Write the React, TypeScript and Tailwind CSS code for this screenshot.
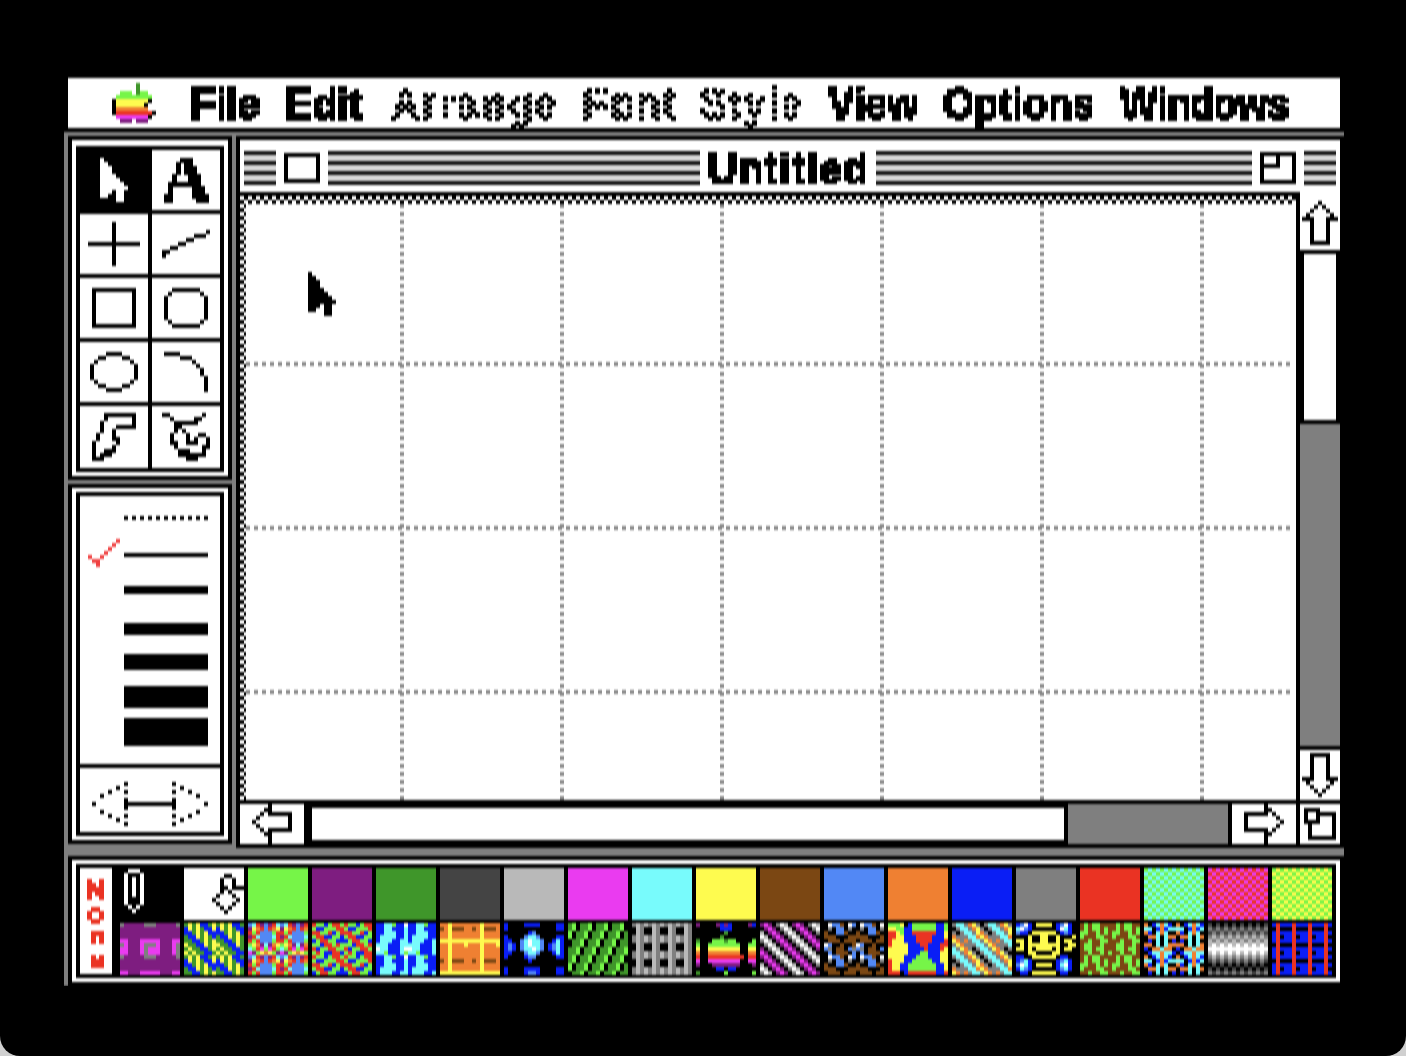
import React from "react";

const colors: Record<string, string> = {
  "#": "#000000",
  K: "#000000",
  W: "#ffffff",
  d: "#444444",
  g: "#7f7f7f",
  l: "#b9b9b9",
  P: "#7e1d80",
  M: "#ea3bf0",
  B: "#0a1ef5",
  b: "#5288f5",
  C: "#78fbfc",
  Y: "#fefb4f",
  G: "#76f548",
  D: "#3f962a",
  R: "#ea3323",
  O: "#ef8032",
  N: "#7b4713",
};

type BitmapProps = {
  rows: string[];
  color?: string;
  cols?: number;
  lines?: number;
  className?: string;
};

// every char of a row is one 4px pixel of the old screen
const Bitmap = ({ rows, color, cols, lines, className }: BitmapProps) => {
  const w = cols ?? rows[0].length;
  const h = lines ?? rows.length;
  const cells = [];
  for (let y = 0; y < h; y++) {
    const row = rows[y % rows.length];
    for (let x = 0; x < w; x++) {
      const c = row[x % row.length];
      if (c === "." || c === undefined) continue;
      cells.push(
        <rect
          key={x + "-" + y}
          x={x * 4}
          y={y * 4}
          width={4}
          height={4}
          fill={c === "#" && color ? color : colors[c]}
        />
      );
    }
  }
  return (
    <svg
      width={w * 4}
      height={h * 4}
      shapeRendering="crispEdges"
      className={className}
    >
      {cells}
    </svg>
  );
};

const flipX = (rows: string[]) => rows.map((r) => r.split("").reverse().join(""));
const flipY = (rows: string[]) => [...rows].reverse();
const mirror = (left: string, mid: string) =>
  left + mid + left.split("").reverse().join("");
const diag = (seq: string) =>
  seq.split("").map((_, i) => seq.slice(-i || seq.length) + seq.slice(0, -i || seq.length));

const arrowCursor = [
  "#......",
  "##.....",
  "###....",
  "###....",
  "####...",
  "#####..",
  "######.",
  "#######",
  "###.##.",
  "##..##.",
  "....##.",
];
const apple = [
  "......D....",
  "......D....",
  "..GGG.DGG..",
  ".GGGGGGGGG.",
  "KYYYYYYYYK.",
  "KYYYYYYYK..",
  "KOOOOOOOO..",
  "KRRRRRRRRRK",
  ".MMMMMMMMK.",
  "..PPP.PPP..",
];
const cross = [
  "......#......",
  "......#......",
  "......#......",
  "......#......",
  "......#......",
  "#############",
  "......#......",
  "......#......",
  "......#......",
  "......#......",
  "......#......",
];
const lineTool = [
  "...........#",
  "........###.",
  "......##....",
  "....##......",
  "..##........",
  "##..........",
  "#...........",
];
const rectTool = [
  "###########",
  "#.........#",
  "#.........#",
  "#.........#",
  "#.........#",
  "#.........#",
  "#.........#",
  "#.........#",
  "#.........#",
  "###########",
];
const roundTool = [
  "..#######..",
  ".#.......#.",
  "#.........#",
  "#.........#",
  "#.........#",
  "#.........#",
  "#.........#",
  "#.........#",
  ".#.......#.",
  "..#######..",
];
const ovalTool = [
  "....####....",
  "..##....##..",
  ".#........#.",
  "#..........#",
  "#..........#",
  "#..........#",
  "#..........#",
  ".#........#.",
  "..##....##..",
  "....####....",
];
const arcTool = [
  "####.......",
  "....###....",
  ".......#...",
  "........#..",
  ".........#.",
  ".........#.",
  "..........#",
  "..........#",
  "..........#",
  "..........#",
];
const polyTool = [
  "...########",
  "...#......#",
  "..#.......#",
  "..#...#####",
  "..#..#.....",
  ".#...#.....",
  ".#...##....",
  "#.....#....",
  "#....#.....",
  "#..###.....",
  "#.###......",
  "###........",
];
const scribbleTool = [
  "##........#.",
  "..#.....##..",
  "...######...",
  "...##.......",
  "...#.#......",
  "..#...#..##.",
  "..#...#.#..#",
  "..##..###..#",
  "...#......##",
  "....###...#.",
  "....#######.",
  "......###...",
];
const upArrow = [
  "....#....",
  "...#.#...",
  "..#...#..",
  ".#.....#.",
  "###...###",
  "..#...#..",
  "..#...#..",
  "..#...#..",
  "..#...#..",
  "..#...#..",
  "..#####..",
];
const leftArrow = [
  "....#.....",
  "...##.....",
  "..#.######",
  ".#.......#",
  "#........#",
  ".#.......#",
  "..#.######",
  "...##.....",
  "....#.....",
  "....#.....",
];
const zoomBox = [
  "#########",
  "#...#...#",
  "#...#...#",
  "#####...#",
  "#.......#",
  "#.......#",
  "#.......#",
  "#########",
];
const growBox = [
  "####....",
  "#..#####",
  "#..#...#",
  "####...#",
  ".#.....#",
  ".#.....#",
  ".#.....#",
  ".#######",
];
const dumbbell = [
  mirror("........#.....", "."),
  mirror("......#.......", "."),
  mirror("....#...#.....", "."),
  mirror("..#...........", "."),
  mirror("........#.....", "."),
  mirror("#.......######", "#"),
  mirror("........#.....", "."),
  mirror("..#...........", "."),
  mirror("....#...#.....", "."),
  mirror("......#.......", "."),
  mirror("........#.....", "."),
];
const checkMark = [
  ".......#",
  "......#.",
  ".....#..",
  "....#...",
  "#..#....",
  ".##.....",
  "..#.....",
];
const pencil = [
  ".###.",
  "#...#",
  "#.#.#",
  "#.#.#",
  "#.#.#",
  "#.#.#",
  "#.#.#",
  "#...#",
  "#...#",
  ".#.#.",
  "..#..",
];
const bucket = [
  "...##...",
  "..#..#..",
  "..#..#..",
  "..##.###",
  "..#.#...",
  ".#...#..",
  "#.....#.",
  ".#...#..",
  "..#.#...",
  "...#....",
];

const solids = [
  "bg-[#76f548]",
  "bg-[#7e1d80]",
  "bg-[#3f962a]",
  "bg-[#444444]",
  "bg-[#b9b9b9]",
  "bg-[#ea3bf0]",
  "bg-[#78fbfc]",
  "bg-[#fefb4f]",
  "bg-[#7b4713]",
  "bg-[#5288f5]",
  "bg-[#ef8032]",
  "bg-[#0a1ef5]",
  "bg-[#7f7f7f]",
  "bg-[#ea3323]",
];
const checks = [["GC", "CG"], ["MR", "RM"], ["GY", "YG"]];

const patterns: string[][] = [
  ["gPPPPPgg", "PPPPPPPP", "PPPPPPPP", "PPPPPPPP", "MMPPPMMM", "gMPPPMgg", "MMPPPMgM", "MMPPPMgM"],
  ["DYDYBBDY", "BYDYDBBY", "BBDYDYBB", "DBBYDYDB", "DDBBDYDY", "YDDBBYDY", "DYDDBBDY", "YDYDDBBD"],
  ["bCRPbPRC", "PYORbROY", "RGRbbbGR", "PRCbbbCR", "RGRbbbGR", "GYOPCPOY", "CGRMGMRG", "MPGYOYGP"],
  ["RGGBGRRG", "GBBGGGRR", "RRGGRBGR", "GRRBBGGB", "BGRRGGBB", "GGBRRGRG", "RBGGRRGG", "GRGBBRRB"],
  ["BBCCGBBW", "BBCCBBBC", "BBCCCBBC", "BCCCCBBC", "BCCCBBCC", "CCCBBBCC", "WCCBBBCW", "CCGBBBCG"],
  ["OOYOOOOO", "NOYNNNOO", "OOYOOOOO", "OOYOOOOO", "YYYYYYYY", "OOYOOOYO", "OOYOOOOO", "OOYOOOOO"],
  [
    "BKKKKBBBBKKKKB",
    "BKKKKKKKKKKKKB",
    "KKKKKKBbKKKKKK",
    "BKKKKbCCbKKKKB",
    "BBKKbCWCCbKKBC",
    "BbBKbCWCCbKBbC",
    "BbBKbCCWCbKBbC",
    "BBKKKbCCbKKKBC",
    "BKKKKBbbKKKKKB",
    "KKKKKKBKKKKKKK",
    "KKKKKKKKKKKKKK",
    "BKKKKBBBBKKKKB",
    "BKKKKBbbBKKKKB",
  ],
  ["DGKDDGKD", "DGKDDGKD", "GKDDGKDD", "GKDDGKDD", "KDDGKDDG", "KDDGKDDG", "DDGKDDGK", "DDGKDDGK"],
  ["glgl", "KlgK", "KlgK", "glgl"],
  [
    "PKKKKPBPBKKKKPB",
    "KKKKKKBBBKKKKKK",
    "KKKKKKKDKKKKKKK",
    "KKKKKKDKKKKKKKK",
    "DKKKGGGDGGKKKKG",
    "GKKGGGGGGGGKKGG",
    "YKKYYYYYYYYKKYY",
    "OKKOOOOOOOOKKOO",
    "RKKRRRRRRRRRKRR",
    "MKKMMMMMMMMKKMM",
    "PKKKPPPPPPPKKKP",
    "KKKKKBBKBBKKKKK",
    "DKKKKKKGKKKKKKG",
  ],
  diag("PMPKgWlK"),
  ["KWbbNKWb", "KgKbbKgK", "NKKbbNKK", "NNNKKKNN", "KNNNKNNN", "WbKKNKKN", "bgKNNKbg", "KbKNNNKb"],
  [
    "GGGYKBGGGGGGBBG",
    "YYGGBBGGGGGGBBG",
    "RRYGBBRRRRRRBBY",
    "RRYYBBBRRRRBBBY",
    "RYYYBBBRRRRBBBR",
    "RYYYYBBBRRBBBRR",
    "YYYYYBBBBRBBBRY",
    "YYYYYBBBGGBBBYY",
    "YYYYBBBGGGBBBYY",
    "RYYYBBGGGGGBBYY",
    "RYYBBGGGGGGGBBY",
    "RYYBBGGGGGGGBBY",
    "RRRKBRRRRRRRBBR",
  ],
  ["gCCgOYgK", "KgCCgOYg", "gKgCCgYO", "OgggCCOY", "YOgOgCCg", "gYOgggCC", "CgYOgKgC", "CCgOYgKg"],
  [
    "BbWBKYYYYKBbWBK",
    "CWbBKKKKKKBWCBK",
    "bBBKYYYYYYKBbBK",
    "KKKYKKYYKKYKKKY",
    "YYKYKKYYKKYKYYK",
    "KYKYYYYYYYYKKYY",
    "YYKYKYYYYKYKYYK",
    "KKKYYKKKKYYKKKK",
    "BBKKYYYYYYKBBKK",
    "BbCBKKKKKKBbCBK",
    "bWCBKYYYYKBCWBK",
    "BCbBKKKKKKBbCBK",
    "KBBKYYYYYYKBBKK",
  ],
  ["NGNGGNNN", "NGNGGNGN", "GGNNGNGN", "GNNNGGNN", "NNGNNGGN", "NGGNNGNN", "NGGNGGNN", "NNGNNGNG"],
  ["OKBCOCBK", "CCKBOBCC", "OBKCOCKK", "KOOCKCOO", "KBKCKCKB", "OOKCKCOO", "BKOOCOOK", "KBCCOCCB"],
  ["dK", "gd", "dg", "gl", "lg", "lW", "WW", "lW", "gl", "dg", "Kd", "dK", "gd"],
  ["BRBB", "KRKK", "BRBB", "BRKB"],
];

const Stripes = ({ className }: { className: string }) => (
  <div
    className={
      "h-[34px] bg-[repeating-linear-gradient(#111111_0_4px,#d8d8d8_4px_10px)] " +
      className
    }
  />
);

const ToolCell = ({ rows, dark }: { rows: string[]; dark?: boolean }) => (
  <div
    className={
      "flex items-center justify-center " + (dark ? "bg-black" : "bg-white")
    }
  >
    <Bitmap rows={rows} color={dark ? "#ffffff" : "#000000"} />
  </div>
);

const App = () => {
  return (
    <div className="w-[1406px] h-[1056px] bg-[#d0d0d0] overflow-hidden font-['Liberation_Sans',sans-serif]">
      <svg className="absolute w-0 h-0">
        <defs>
          <filter id="crt" x="0" y="0" width="100%" height="100%" colorInterpolationFilters="sRGB">
            <feGaussianBlur stdDeviation="0 1.1" />
          </filter>
          <filter id="pixelate" x="0" y="0" width="100%" height="100%" colorInterpolationFilters="sRGB">
            <feFlood x="2" y="2" width="1" height="1" />
            <feComposite width="4" height="4" />
            <feTile result="grid" />
            <feComposite in="SourceGraphic" in2="grid" operator="in" />
            <feComponentTransfer>
              <feFuncA type="discrete" tableValues="0 1 1 1" />
            </feComponentTransfer>
            <feMorphology operator="dilate" radius="2" />
          </filter>
          <filter id="dither" x="0" y="0" width="100%" height="100%" colorInterpolationFilters="sRGB">
            <feFlood x="2" y="2" width="1" height="1" result="p1" />
            <feFlood x="6" y="6" width="1" height="1" result="p2" />
            <feMerge x="0" y="0" width="8" height="8">
              <feMergeNode in="p1" />
              <feMergeNode in="p2" />
            </feMerge>
            <feTile result="grid" />
            <feComposite in="SourceGraphic" in2="grid" operator="in" />
            <feComponentTransfer>
              <feFuncA type="discrete" tableValues="0 1 1 1" />
            </feComponentTransfer>
            <feMorphology operator="dilate" radius="2" />
          </filter>
        </defs>
      </svg>

      <div className="w-full h-full bg-black rounded-b-[20px] pl-[64px] pt-[78px]">
        <div className="w-[1280px] [filter:url(#crt)]">
          {/* menu bar */}
          <div className="bg-black px-1 pb-1">
            <div className="h-[50px] bg-white flex items-center text-[40px] leading-[48px] font-bold text-black">
              <Bitmap rows={apple} className="ml-[44px] mr-[35px]" />
              <span className="w-[95px] scale-y-[1.12] [filter:url(#pixelate)]">File</span>
              <span className="w-[105px] scale-y-[1.12] [filter:url(#pixelate)]">Edit</span>
              <span className="w-[192px] scale-y-[1.12] tracking-[2px] [filter:url(#dither)]">Arrange</span>
              <span className="w-[117px] scale-y-[1.12] tracking-[2px] [filter:url(#dither)]">Font</span>
              <span className="w-[128px] scale-y-[1.12] tracking-[2px] [filter:url(#dither)]">Style</span>
              <span className="w-[115px] scale-y-[1.12] [filter:url(#pixelate)]">View</span>
              <span className="w-[177px] scale-y-[1.12] [filter:url(#pixelate)]">Options</span>
              <span className="w-[172px] scale-y-[1.12] tracking-[-1px] [filter:url(#pixelate)]">Windows</span>
            </div>
          </div>

          <div className="bg-[#7f7f7f] pt-1">
            <div className="flex">
              {/* tools and line widths */}
              <div className="w-[172px] px-1 flex flex-col gap-1">
                <div className="border-4 border-black bg-white pt-[6px] pb-1 px-1">
                  <div className="border-4 border-black bg-black grid grid-cols-[68px_68px] grid-rows-[60px_60px_60px_60px_62px] gap-1">
                    <ToolCell rows={arrowCursor} dark />
                    <div className="bg-white flex items-center justify-center">
                      <span className="font-['Liberation_Serif',serif] font-bold text-[72px] leading-[60px] [filter:url(#pixelate)]">
                        A
                      </span>
                    </div>
                    <ToolCell rows={cross} />
                    <ToolCell rows={lineTool} />
                    <ToolCell rows={rectTool} />
                    <ToolCell rows={roundTool} />
                    <ToolCell rows={ovalTool} />
                    <ToolCell rows={arcTool} />
                    <ToolCell rows={polyTool} />
                    <ToolCell rows={scribbleTool} />
                  </div>
                </div>

                <div className="border-4 border-black bg-white p-1">
                  <div className="border-4 border-black bg-white">
                    <div className="h-[268px] pl-[44px] pt-[20px]">
                      <div className="h-1 w-[84px] bg-[repeating-linear-gradient(90deg,#000000_0_4px,#ffffff_4px_8px)]" />
                      <div className="relative mt-[33px] h-1 w-[84px] bg-black">
                        <Bitmap rows={checkMark} color="#f04040" className="absolute left-[-36px] top-[-14px]" />
                      </div>
                      <div className="mt-[29px] h-2 w-[84px] bg-black" />
                      <div className="mt-[29px] h-3 w-[84px] bg-black" />
                      <div className="mt-[19px] h-4 w-[84px] bg-black" />
                      <div className="mt-[16px] h-[22px] w-[84px] bg-black" />
                      <div className="mt-[10px] h-[28px] w-[84px] bg-black" />
                    </div>
                    <div className="h-[68px] pt-2 border-t-4 border-black flex items-center justify-center">
                      <Bitmap rows={dumbbell} />
                    </div>
                  </div>
                </div>
              </div>

              {/* document window */}
              <div className="w-[1108px] border-4 border-black bg-white">
                <div className="h-[52px] bg-white flex items-center pt-[4px] pl-1 pr-1">
                  <Stripes className="w-8 ml-0" />
                  <div className="ml-2 w-9 h-[30px] border-4 border-black" />
                  <Stripes className="ml-2 w-[372px]" />
                  <span className="ml-2 w-[168px] text-[40px] leading-[46px] font-bold tracking-[1.5px] scale-y-[1.12] text-black [filter:url(#pixelate)]">
                    Untitled
                  </span>
                  <Stripes className="w-[376px]" />
                  <Bitmap rows={zoomBox} className="ml-2" />
                  <Stripes className="ml-2 w-8" />
                </div>

                <div className="h-[608px] border-t-4 border-black flex">
                  <div className="w-[1056px] pt-2 pl-[6px] bg-[conic-gradient(#000000_25%,#ffffff_0_50%,#000000_0_75%,#ffffff_0)] bg-[length:8px_8px]">
                    <div className="relative h-full bg-white">
                      <svg className="absolute inset-0 w-full h-full">
                        {[156, 316, 476, 636, 796, 956].map((x) => (
                          <line key={x} x1={x} y1={0} x2={x} y2={596} stroke="#888888" strokeWidth={4} strokeDasharray="4 4" />
                        ))}
                        {[160, 324, 488].map((y) => (
                          <line key={y} x1={0} y1={y} x2={1046} y2={y} stroke="#888888" strokeWidth={4} strokeDasharray="4 4" />
                        ))}
                      </svg>
                      <Bitmap rows={arrowCursor} className="absolute left-[62px] top-[68px]" />
                    </div>
                  </div>

                  {/* vertical scroll bar */}
                  <div className="w-11 -mt-1 border-l-4 border-black bg-black flex flex-col">
                    <div className="h-[58px] bg-white flex items-center justify-center pt-1">
                      <Bitmap rows={upArrow} />
                    </div>
                    <div className="h-[174px] border-4 border-black bg-white" />
                    <div className="h-[322px] bg-[#7f7f7f]" />
                    <div className="h-[50px] mt-1 bg-white flex items-center justify-center">
                      <Bitmap rows={flipY(upArrow)} />
                    </div>
                  </div>
                </div>

                {/* horizontal scroll bar */}
                <div className="h-11 border-t-4 border-black flex bg-black">
                  <div className="w-16 bg-white flex items-center pl-3">
                    <Bitmap rows={leftArrow} />
                  </div>
                  <div className="w-[764px] border-y-4 border-l-8 border-r-4 border-black bg-white" />
                  <div className="w-40 bg-[#7f7f7f]" />
                  <div className="w-16 ml-1 bg-white flex items-center justify-end pr-3">
                    <Bitmap rows={flipX(leftArrow)} />
                  </div>
                  <div className="w-10 ml-1 bg-white flex items-center justify-center">
                    <Bitmap rows={growBox} />
                  </div>
                </div>
              </div>
            </div>

            {/* colours and patterns */}
            <div className="pt-2 pl-1">
              <div className="border-4 border-black bg-white p-1">
                <div className="border-4 border-black bg-black flex h-[114px]">
                  <div className="w-8 bg-white flex items-center justify-center">
                    <span className="[writing-mode:vertical-rl] [text-orientation:upright] text-[26px] leading-[26px] font-bold tracking-[-7px] text-[#ea3323] [filter:url(#pixelate)]">
                      None
                    </span>
                  </div>
                  <div className="ml-2 grid grid-cols-[repeat(19,60px)] grid-rows-[52px_52px] gap-x-1 gap-y-[3px]">
                    <div className="flex justify-start pl-1 pt-[1px]">
                      <Bitmap rows={pencil} color="#ffffff" />
                    </div>
                    <div className="bg-white flex items-center justify-end">
                      <Bitmap rows={bucket} />
                    </div>
                    {solids.map((c) => (
                      <div key={c} className={c} />
                    ))}
                    {checks.map((rows) => (
                      <Bitmap key={rows[0]} rows={rows} cols={15} lines={13} />
                    ))}
                    {patterns.map((rows, i) => (
                      <Bitmap key={i} rows={rows} cols={15} lines={13} />
                    ))}
                  </div>
                </div>
              </div>
            </div>
          </div>
        </div>
      </div>
    </div>
  );
};

export default App;
